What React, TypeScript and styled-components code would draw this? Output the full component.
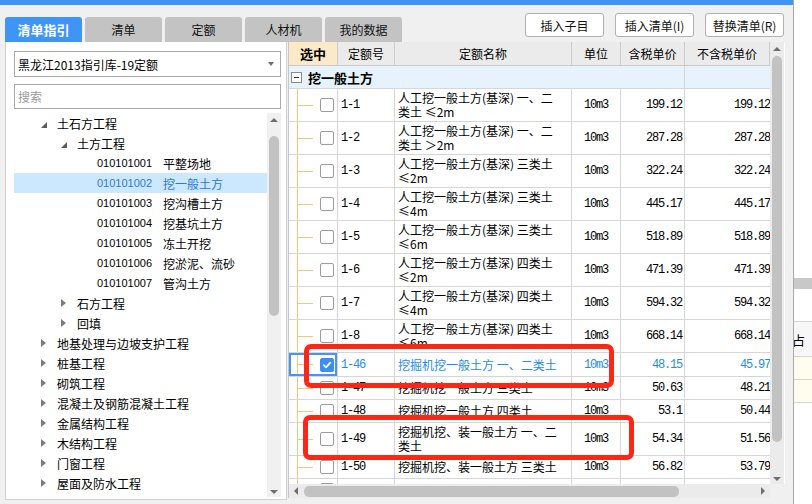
import React from 'react';
import styled, { createGlobalStyle } from 'styled-components';

const CJK = `"Noto Sans CJK SC", "Liberation Sans", sans-serif`;
const MONO = `"Liberation Mono", "Noto Sans CJK SC", monospace`;

const GlobalStyle = createGlobalStyle`
  html, body { margin: 0; padding: 0; }
  body {
    width: 812px;
    height: 504px;
    overflow: hidden;
    background: #fff;
    font-family: ${CJK};
    font-size: 12px;
    color: #000;
  }
`;

const Screen = styled.div`
  display: flex;
  width: 812px;
  height: 504px;
  overflow: hidden;
`;

const Dialog = styled.div`
  width: 794px;
  flex: none;
  display: flex;
  flex-direction: column;
  box-sizing: border-box;
  background: #f0f0f0;
  border-right: 1px solid #a9a9a9;
`;

const TopBar = styled.div`
  height: 5px;
  flex: none;
  background: #3f95f5;
`;

const Header = styled.div`
  height: 37px;
  flex: none;
  display: flex;
  justify-content: space-between;
  align-items: flex-start;
  padding: 0 9px 0 5px;
`;

const Tabs = styled.div`
  display: flex;
  gap: 3px;
  margin-top: 12px;
`;

const Tab = styled.div<{ $active?: boolean }>`
  width: 77px;
  height: 25px;
  display: flex;
  align-items: center;
  justify-content: center;
  border-radius: 3px 3px 0 0;
  background: ${p => (p.$active ? '#3f95f5' : '#c3c3c3')};
  color: ${p => (p.$active ? '#fff' : '#111')};
  font-weight: ${p => (p.$active ? 700 : 400)};
  font-size: ${p => (p.$active ? 13 : 12)}px;
`;

const Buttons = styled.div`
  display: flex;
  gap: 11px;
  margin-top: 8px;
`;

const Button = styled.button`
  width: 79px;
  height: 24px;
  box-sizing: border-box;
  border: 1px solid #b1b1b1;
  border-radius: 3px;
  background: #fff;
  font-family: ${CJK};
  font-size: 12px;
  color: #111;
  padding: 0;
`;

const Body = styled.div`
  flex: 1;
  display: flex;
  align-items: flex-start;
  padding-left: 5px;
`;

/* ---------- left panel ---------- */

const LeftPanel = styled.div`
  width: 282px;
  height: 458px;
  box-sizing: border-box;
  flex: none;
  display: flex;
  flex-direction: column;
  background: #fff;
  border: 1px solid #d0d0d0;
  border-top: none;
  padding: 9px 5px 2px 8px;
`;

const Select = styled.div`
  height: 26px;
  flex: none;
  box-sizing: border-box;
  border: 1px solid #a9a9a9;
  display: flex;
  align-items: center;
  justify-content: space-between;
  padding: 0 6px 0 3px;
  font-size: 12px;

  &::after {
    content: '';
    width: 0;
    height: 0;
    border-left: 3px solid transparent;
    border-right: 3px solid transparent;
    border-top: 4px solid #6f6f6f;
  }
`;

const Search = styled.div`
  height: 25px;
  flex: none;
  margin-top: 7px;
  box-sizing: border-box;
  border: 1px solid #a9a9a9;
  display: flex;
  align-items: center;
  padding-left: 3px;
  color: #9a9a9a;
`;

const Tree = styled.div`
  flex: 1;
  min-height: 0;
  margin-top: 4px;
  display: flex;
`;

const TreeList = styled.div`
  flex: 1;
  overflow: hidden;
`;

const TreeRow = styled.div<{ $indent: number; $selected?: boolean }>`
  height: 20px;
  display: flex;
  align-items: center;
  white-space: nowrap;
  padding-left: ${p => p.$indent}px;
  background: ${p => (p.$selected ? '#cce8ff' : 'transparent')};
  color: ${p => (p.$selected ? '#2a78e0' : '#000')};
`;

const Arrow = styled.span<{ $open?: boolean }>`
  width: 16px;
  flex: none;
  display: flex;
  align-items: center;

  &::before {
    content: '';
    width: 0;
    height: 0;
    ${p =>
      p.$open
        ? `border-left: 6px solid transparent; border-bottom: 6px solid #5c5c5c; margin-top: 3px;`
        : `border-top: 4px solid transparent; border-bottom: 4px solid transparent; border-left: 5px solid #7c7c7c;`}
  }
`;

const TreeCode = styled.span`
  width: 66px;
  flex: none;
  font-family: "Liberation Sans", sans-serif;
  font-size: 11px;
`;

/* ---------- scrollbars ---------- */

const VScroll = styled.div<{ $bg?: string }>`
  width: 14px;
  flex: none;
  display: flex;
  flex-direction: column;
  align-items: center;
  background: ${p => p.$bg || '#ebebeb'};
`;

const HScroll = styled.div`
  display: flex;
  align-items: center;
  background: #ebebeb;
  padding: 0 5px;
`;

const Thumb = styled.div<{ $len: number; $vertical?: boolean; $gap?: number }>`
  flex: none;
  background: #c2c2c2;
  border-radius: 5px;
  ${p =>
    p.$vertical
      ? `width: 10px; height: ${p.$len}px; margin-top: ${p.$gap ?? 5}px;`
      : `height: 11px; width: ${p.$len}px; margin-left: ${p.$gap ?? 6}px;`}
`;

const Spacer = styled.div`
  flex: 1;
`;

const ScrollArrow = styled.span<{ $dir: 'up' | 'down' | 'left' | 'right' }>`
  flex: none;
  width: 0;
  height: 0;
  ${p => {
    const c = '#6e6e6e';
    if (p.$dir === 'up')
      return `border-left: 4px solid transparent; border-right: 4px solid transparent; border-bottom: 4px solid ${c}; margin-top: 5px;`;
    if (p.$dir === 'down')
      return `border-left: 4px solid transparent; border-right: 4px solid transparent; border-top: 4px solid ${c}; margin-bottom: 3px;`;
    if (p.$dir === 'left')
      return `border-top: 4px solid transparent; border-bottom: 4px solid transparent; border-right: 4px solid ${c};`;
    return `border-top: 4px solid transparent; border-bottom: 4px solid transparent; border-left: 4px solid ${c};`;
  }}
`;

/* ---------- table ---------- */

const TablePanel = styled.div`
  position: relative;
  margin-left: 1px;
  width: 497px;
  height: 456px;
  box-sizing: border-box;
  flex: none;
  border-left: 1px solid #c6c6c6;
  display: grid;
  grid-template-columns: 1fr 15px;
  grid-template-rows: 1fr 14px;
  background: #fff;
`;

const GridArea = styled.div`
  overflow: hidden;
  position: relative;
`;

const COLS = '49px 57px 177px 49px 64px 85px';

const HeadRow = styled.div`
  display: grid;
  grid-template-columns: ${COLS};
  height: 24px;
  box-sizing: border-box;
  background: #ebebeb;
  border-bottom: 1px solid #c9c9c9;
`;

const HeadCell = styled.div<{ $hot?: boolean }>`
  display: flex;
  align-items: center;
  justify-content: center;
  border-right: 1px solid #cdcdcd;
  background: ${p => (p.$hot ? '#fde8c8' : 'transparent')};
  font-weight: ${p => (p.$hot ? 700 : 400)};
  font-size: ${p => (p.$hot ? 13 : 12)}px;
  white-space: nowrap;
`;

const GroupRow = styled.div`
  display: grid;
  grid-template-columns: 396px 85px;
  height: 23px;
  box-sizing: border-box;
  background: #e6f3fd;
  border-bottom: 1px solid #d6d6d6;
`;

const GroupCell = styled.div`
  display: flex;
  align-items: center;
  gap: 6px;
  padding-left: 2px;
  border-right: 1px solid #d6d6d6;
  font-weight: 700;
  font-size: 13px;
`;

const MinusBox = styled.span`
  width: 11px;
  height: 11px;
  box-sizing: border-box;
  border: 1px solid #8c8c8c;
  background: #fff;
  display: flex;
  align-items: center;
  justify-content: center;

  &::after {
    content: '';
    width: 5px;
    height: 1px;
    background: #333;
  }
`;

const DataRow = styled.div<{ $h: number; $active?: boolean }>`
  display: grid;
  grid-template-columns: ${COLS};
  height: ${p => p.$h}px;
  box-sizing: border-box;
  border-bottom: 1px solid #d6d6d6;
  color: ${p => (p.$active ? '#1f8de0' : '#000')};
`;

const Cell = styled.div<{ $align?: 'flex-start' | 'center' | 'flex-end'; $mono?: boolean; $last?: boolean }>`
  display: flex;
  align-items: center;
  justify-content: ${p => p.$align || 'flex-start'};
  padding: ${p => (p.$align === 'flex-end' ? (p.$last ? '0' : '0 2px 0 0') : p.$align === 'center' ? '0' : '0 0 0 3px')};
  border-right: ${p => (p.$last ? 'none' : '1px solid #d6d6d6')};
  overflow: hidden;
  white-space: nowrap;
  font-family: ${p => (p.$mono ? MONO : CJK)};
  letter-spacing: ${p => (p.$mono ? '-1.2px' : '0')};
`;

const NameCell = styled.div`
  display: flex;
  flex-direction: column;
  justify-content: center;
  padding-left: 3px;
  border-right: 1px solid #d6d6d6;
  overflow: hidden;
  white-space: nowrap;
  line-height: 14px;
`;

const LINE = '#f6c47a';

const SelCell = styled.div<{ $focus?: boolean }>`
  display: flex;
  align-items: center;
  padding-left: 31px;
  border-right: 1px solid #d6d6d6;
  background-image: linear-gradient(${LINE}, ${LINE}), linear-gradient(${LINE}, ${LINE});
  background-size: 1px 100%, 16px 1px;
  background-position: 8px 0, 8px 50%;
  background-repeat: no-repeat;
  box-shadow: ${p => (p.$focus ? 'inset 0 0 0 2px #4a94ee' : 'none')};
`;

const Check = styled.span<{ $on?: boolean }>`
  width: 14px;
  height: 14px;
  box-sizing: border-box;
  border-radius: 2px;
  border: 1px solid ${p => (p.$on ? '#3d8ef4' : '#9c9c9c')};
  background: ${p => (p.$on ? '#3d8ef4' : '#fff')};
  display: flex;
  align-items: center;
  justify-content: center;
`;

const RedBox = styled.div<{ $x: number; $y: number; $w: number; $h: number }>`
  position: absolute;
  left: ${p => p.$x}px;
  top: ${p => p.$y}px;
  width: ${p => p.$w}px;
  height: ${p => p.$h}px;
  box-sizing: border-box;
  border: 5px solid #ff2618;
  border-radius: 7px;
  pointer-events: none;
`;

const Corner = styled.div`
  background: #f0f0f0;
`;

/* ---------- window behind ---------- */

const BackWindow = styled.div`
  flex: 1;
  display: flex;
  flex-direction: column;
  background: #fff;
  overflow: hidden;
`;

const BackBlock = styled.div<{ $h: number; $bg: string; $line?: boolean }>`
  height: ${p => p.$h}px;
  flex: none;
  box-sizing: border-box;
  background: ${p => p.$bg};
  border-bottom: ${p => (p.$line ? '1px solid #d6d6d6' : 'none')};
  display: flex;
  align-items: center;
  font-size: 13px;
  white-space: nowrap;
`;

const BackText = styled.span`
  margin-left: -2px;
`;

/* ---------- data ---------- */

type Node = { level: 0 | 1 | 2; label: string; code?: string; open?: boolean; selected?: boolean };

const tree: Node[] = [
  { level: 0, label: '土石方工程', open: true },
  { level: 1, label: '土方工程', open: true },
  { level: 2, code: '010101001', label: '平整场地' },
  { level: 2, code: '010101002', label: '挖一般土方', selected: true },
  { level: 2, code: '010101003', label: '挖沟槽土方' },
  { level: 2, code: '010101004', label: '挖基坑土方' },
  { level: 2, code: '010101005', label: '冻土开挖' },
  { level: 2, code: '010101006', label: '挖淤泥、流砂' },
  { level: 2, code: '010101007', label: '管沟土方' },
  { level: 1, label: '石方工程' },
  { level: 1, label: '回填' },
  { level: 0, label: '地基处理与边坡支护工程' },
  { level: 0, label: '桩基工程' },
  { level: 0, label: '砌筑工程' },
  { level: 0, label: '混凝土及钢筋混凝土工程' },
  { level: 0, label: '金属结构工程' },
  { level: 0, label: '木结构工程' },
  { level: 0, label: '门窗工程' },
  { level: 0, label: '屋面及防水工程' },
  { level: 0, label: '保温、隔热、防腐工程' },
];

const indents = [27, 47, 83];

type Row = { code: string; name: string[]; p1: string; p2: string; h: number; checked?: boolean };

const rows: Row[] = [
  { code: '1-1', name: ['人工挖一般土方(基深) 一、二', '类土 ≤2m'], p1: '199.12', p2: '199.12', h: 33 },
  { code: '1-2', name: ['人工挖一般土方(基深) 一、二', '类土 ＞2m'], p1: '287.28', p2: '287.28', h: 33 },
  { code: '1-3', name: ['人工挖一般土方(基深) 三类土', '≤2m'], p1: '322.24', p2: '322.24', h: 33 },
  { code: '1-4', name: ['人工挖一般土方(基深) 三类土', '≤4m'], p1: '445.17', p2: '445.17', h: 33 },
  { code: '1-5', name: ['人工挖一般土方(基深) 三类土', '≤6m'], p1: '518.89', p2: '518.89', h: 33 },
  { code: '1-6', name: ['人工挖一般土方(基深) 四类土', '≤2m'], p1: '471.39', p2: '471.39', h: 33 },
  { code: '1-7', name: ['人工挖一般土方(基深) 四类土', '≤4m'], p1: '594.32', p2: '594.32', h: 33 },
  { code: '1-8', name: ['人工挖一般土方(基深) 四类土', '≤6m'], p1: '668.14', p2: '668.14', h: 33 },
  { code: '1-46', name: ['挖掘机挖一般土方 一、二类土'], p1: '48.15', p2: '45.97', h: 24, checked: true },
  { code: '1-47', name: ['挖掘机挖一般土方 三类土'], p1: '50.63', p2: '48.21', h: 23 },
  { code: '1-48', name: ['挖掘机挖一般土方 四类土'], p1: '53.1', p2: '50.44', h: 23 },
  { code: '1-49', name: ['挖掘机挖、装一般土方 一、二', '类土'], p1: '54.34', p2: '51.56', h: 33 },
  { code: '1-50', name: ['挖掘机挖、装一般土方 三类土'], p1: '56.82', p2: '53.79', h: 23 },
  { code: '1-51', name: ['挖掘机挖、装一般土方 四类土'], p1: '59.3', p2: '56.29', h: 23 },
];

const CheckMark = () => (
  <svg width="10" height="10" viewBox="0 0 10 10">
    <path d="M1.8 5.2 L4.1 7.4 L8.3 2.6" stroke="#fff" strokeWidth="1.8" fill="none" strokeLinecap="round" strokeLinejoin="round" />
  </svg>
);

export default function App() {
  return (
    <Screen>
      <GlobalStyle />
      <Dialog>
        <TopBar />
        <Header>
          <Tabs>
            <Tab $active>清单指引</Tab>
            <Tab>清单</Tab>
            <Tab>定额</Tab>
            <Tab>人材机</Tab>
            <Tab>我的数据</Tab>
          </Tabs>
          <Buttons>
            <Button>插入子目</Button>
            <Button>插入清单(I)</Button>
            <Button>替换清单(R)</Button>
          </Buttons>
        </Header>
        <Body>
          <LeftPanel>
            <Select>黑龙江2013指引库-19定额</Select>
            <Search>搜索</Search>
            <Tree>
              <TreeList>
                {tree.map((n, i) => (
                  <TreeRow key={i} $indent={indents[n.level]} $selected={n.selected}>
                    {n.level < 2 && <Arrow $open={n.open} />}
                    {n.code && <TreeCode>{n.code}</TreeCode>}
                    <span>{n.label}</span>
                  </TreeRow>
                ))}
              </TreeList>
              <VScroll $bg="#f0f0f0">
                <ScrollArrow $dir="up" />
                <Thumb $vertical $len={180} $gap={14} />
                <Spacer />
                <ScrollArrow $dir="down" />
              </VScroll>
            </Tree>
          </LeftPanel>

          <TablePanel>
            <GridArea>
              <HeadRow>
                <HeadCell $hot>选中</HeadCell>
                <HeadCell>定额号</HeadCell>
                <HeadCell>定额名称</HeadCell>
                <HeadCell>单位</HeadCell>
                <HeadCell>含税单价</HeadCell>
                <HeadCell>不含税单价</HeadCell>
              </HeadRow>
              <GroupRow>
                <GroupCell>
                  <MinusBox />
                  挖一般土方
                </GroupCell>
                <div />
              </GroupRow>
              {rows.map(r => (
                <DataRow key={r.code} $h={r.h} $active={r.checked}>
                  <SelCell $focus={r.checked}>
                    <Check $on={r.checked}>{r.checked && <CheckMark />}</Check>
                  </SelCell>
                  <Cell $mono>{r.code}</Cell>
                  <NameCell>
                    {r.name.map((l, i) => (
                      <span key={i}>{l}</span>
                    ))}
                  </NameCell>
                  <Cell $mono $align="center">10m3</Cell>
                  <Cell $mono $align="flex-end">{r.p1}</Cell>
                  <Cell $mono $align="flex-end" $last>{r.p2}</Cell>
                </DataRow>
              ))}
            </GridArea>
            <VScroll>
              <ScrollArrow $dir="up" />
              <Thumb $vertical $len={386} />
              <Spacer />
              <ScrollArrow $dir="down" />
            </VScroll>
            <HScroll>
              <ScrollArrow $dir="left" />
              <Thumb $len={375} />
              <Spacer />
              <ScrollArrow $dir="right" />
            </HScroll>
            <Corner />
            <RedBox $x={15} $y={302} $w={310} $h={44} />
            <RedBox $x={14} $y={373} $w={331} $h={45} />
          </TablePanel>
        </Body>
      </Dialog>
      <BackWindow>
        <BackBlock $h={278} $bg="#fff" />
        <BackBlock $h={11} $bg="#c8c8c8" />
        <BackBlock $h={33} $bg="#fff" $line />
        <BackBlock $h={35} $bg="#f7f7f7" $line>
          <BackText>占</BackText>
        </BackBlock>
        <BackBlock $h={23} $bg="#fffdee" $line />
        <BackBlock $h={23} $bg="#fffdee" $line />
      </BackWindow>
    </Screen>
  );
}
